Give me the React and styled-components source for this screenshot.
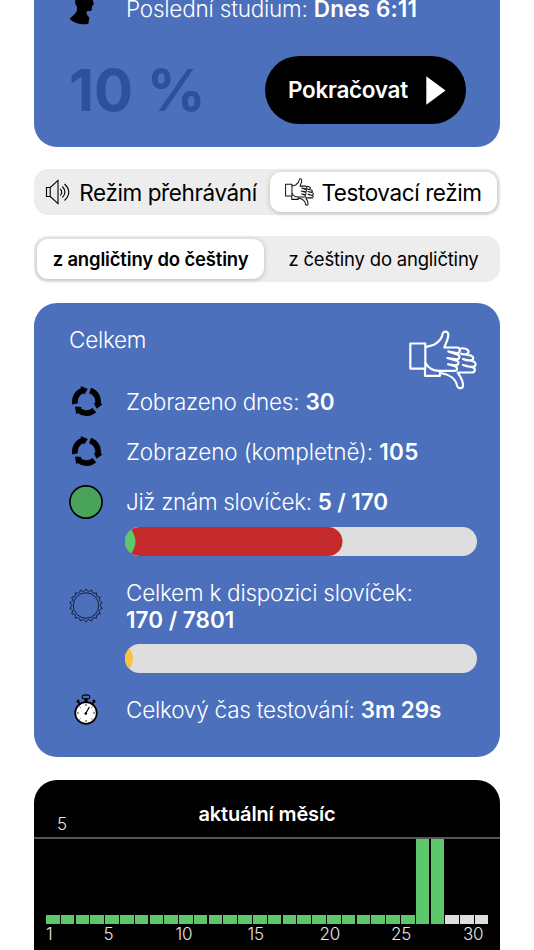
import React from "react";
import styled, { createGlobalStyle } from "styled-components";

const Global = createGlobalStyle`
  * { box-sizing: border-box; }
  body { margin: 0; background: #fff; font-family: Inter, "Noto Sans", sans-serif; }
`;

const Page = styled.main`
  width: 534px;
  height: 950px;
  overflow: hidden;
  padding: 0 34px;
  display: flex;
  flex-direction: column;
`;

const Text = styled.span`
  display: block;
  white-space: nowrap;
  font-size: ${(p) => p.$size || 22.5}px;
  font-weight: ${(p) => p.$weight || 300};
  letter-spacing: ${(p) => p.$track || 0}px;
  line-height: 27px;
  color: ${(p) => p.$color || "#fff"};
  b { font-weight: 600; letter-spacing: ${(p) => p.$boldTrack || 0}px; }
`;

const StudyCard = styled.section`
  flex: none;
  height: 147px;
  background: #4c70bc;
  border-radius: 0 0 23px 23px;
  padding: 0 34px 0 35px;
`;

const StudyRow = styled.div`
  display: flex;
  height: 56px;
  svg { flex: none; margin-right: 31px; }
  span { margin-top: -5px; }
`;

const StudyActions = styled.div`
  display: flex;
  align-items: center;
  justify-content: space-between;
  height: 68px;
`;

const ContinueButton = styled.button`
  width: 201px;
  height: 68px;
  border: 0;
  border-radius: 34px;
  background: #000;
  padding: 0 20px 0 23px;
  display: flex;
  align-items: center;
  justify-content: space-between;
  font-family: inherit;
  span { margin-top: -1px; }
`;

const Segmented = styled.div`
  flex: none;
  height: 46px;
  margin-top: ${(p) => p.$top}px;
  padding: 3px;
  border-radius: 14px;
  background: #ededed;
  display: grid;
  grid-template-columns: ${(p) => p.$columns};
`;

const Segment = styled.button`
  border: 0;
  padding: ${(p) => p.$padding || 0};
  font-family: inherit;
  border-radius: 11px;
  background: ${(p) => (p.$active ? "#fff" : "transparent")};
  box-shadow: ${(p) => (p.$active ? "0 1px 5px rgba(0,0,0,.22)" : "none")};
  display: flex;
  align-items: center;
  justify-content: center;
  gap: ${(p) => p.$gap || 0}px;
`;

const StatsCard = styled.section`
  flex: none;
  height: 454px;
  margin-top: 21px;
  border-radius: 23px;
  background: #4c70bc;
  padding: 23px 23px 0 35px;
`;

const StatsHeader = styled.header`
  display: flex;
  justify-content: space-between;
  height: 50px;
  svg { margin-top: 4px; flex: none; }
`;

const Stat = styled.div`
  display: grid;
  grid-template-columns: 57px 351px;
  align-items: center;
  height: ${(p) => p.$height || 50}px;
  padding-top: ${(p) => p.$top || 0}px;
`;

const IconSlot = styled.div`
  width: 34px;
  display: flex;
  justify-content: center;
`;

const Track = styled.div`
  width: 352px;
  height: 29px;
  margin: ${(p) => p.$margin};
  border-radius: 15px;
  overflow: hidden;
  background: #dedede;
  svg { display: block; }
`;

const ChartCard = styled.section`
  flex: none;
  height: 190px;
  margin-top: 23px;
  border-radius: 23px 23px 0 0;
  background: #000;
`;

const ChartHeader = styled.header`
  height: 59px;
  border-bottom: 2px solid #565656;
  display: grid;
  grid-template-columns: 104px 258px 104px;
`;

const MaxLabel = styled.div`
  padding: 31px 0 0 23px;
`;

const ChartTitle = styled.div`
  padding-top: 21px;
  text-align: center;
`;

const Bars = styled.div`
  height: 85px;
  margin-left: 12px;
  width: 442.5px;
  display: grid;
  grid-template-columns: repeat(30, 1fr);
  column-gap: 1.2px;
  align-items: end;
`;

const Bar = styled.i`
  height: ${(p) => p.$height}px;
  background: ${(p) => p.$color};
`;

const Axis = styled.div`
  display: grid;
  grid-template-columns: 57.5px 72px 72px 72px 71.5px 72px 40px;
  margin: -3px 0 0 12px;
  height: 24px;
`;

const HeadIcon = () => (
  <svg width="26" height="25" viewBox="117 0 78 75">
    <path d="M136 0C133 9 139 15 141 22C142 31 139 38 134 42L119 56C130 69 154 75 175 72L178 52C169 45 168 36 172 33L183 33C187 30 185 25 186 22L188 16L192 13L188 0Z" />
  </svg>
);

const PlayIcon = () => (
  <svg width="20" height="29" viewBox="0 0 20 29"><path d="M.3.3 19.5 14.5.3 28.7Z" fill="#fff" /></svg>
);

const SpeakerIcon = () => (
  <svg width="26" height="26" viewBox="0 0 26 26" fill="none" stroke="#000" strokeWidth="1.1">
    <path d="M1.5 8.5H5.2V17.5H1.5ZM5.2 8.5 13 1.4V24.6L5.2 17.5M15.2 9.8Q18.3 13 15.2 16.5M17.3 7.5Q22.5 13 17.3 18.5M19.5 5Q28 13 19.5 21.5" />
  </svg>
);

const ThumbsIcon = ({ width, height, color, stroke }) => (
  <svg width={width} height={height} viewBox="41 104 204 182" preserveAspectRatio="none" fill="none" stroke={color} strokeWidth={stroke} strokeLinejoin="round" strokeLinecap="round">
    <path d="M45 145H90V221H45ZM89 221V243H134V234" />
    <path d="M91 156L116 149C132 139 141 126 142 115C145 106 157 107 159 117C160 131 151 144 147 157H187C197 160 195 173 185 174L159 169L185 178C196 181 194 192 184 193L156 189L183 197C194 200 190 211 180 211L158 208L179 214C188 218 187 228 176 228H132C111 228 97 216 91 205" />
    <path d="M194 161C205 157 219 162 220 170C217 178 207 179 197 176L218 180C233 180 237 190 231 194C223 198 212 196 203 192L230 198C244 201 243 213 235 215C224 217 213 214 203 210L233 218C242 220 240 233 230 233H187C199 250 206 265 202 277C197 284 187 280 185 273C182 251 160 238 134 234" />
  </svg>
);

const polar = (r, deg) => {
  const a = (deg * Math.PI) / 180;
  return `${(45 + r * Math.sin(a)).toFixed(1)} ${(45 - r * Math.cos(a)).toFixed(1)}`;
};
const armPath = (start) =>
  `M${polar(43, start)}A43 43 0 0 1 ${polar(43, start + 80)}L${polar(49, start + 81)}L${polar(37, start + 108)}L${polar(22, start + 84)}L${polar(26, start + 82)}A26 26 0 0 0 ${polar(26, start)}Z`;

const CycleIcon = () => (
  <svg width="31" height="31" viewBox="-1 -1 92 92">
    {[18, 138, 258].map((a) => <path key={a} d={armPath(a)} />)}
  </svg>
);

const DotIcon = () => (
  <svg width="34" height="34" viewBox="0 0 34 34"><circle cx="17" cy="17" r="16.1" fill="#4aa35a" stroke="#000" strokeWidth="1.6" /></svg>
);

const sunPoints = Array.from({ length: 18 }, (_, i) => {
  const at = (r, a) => `${(17.5 + r * Math.sin(a)).toFixed(2)} ${(17.5 - r * Math.cos(a)).toFixed(2)}`;
  const a = (i * Math.PI) / 9;
  return `${i ? "L" : "M"}${at(17, a)}Q${at(15, a + 0.09)} ${at(14.7, a + Math.PI / 18)}Q${at(15, a + 0.26)} ${at(17, a + Math.PI / 9)}`;
}).join("");

const SunIcon = () => (
  <svg width="35" height="35" viewBox="0 0 35 35" fill="none" stroke="#101c35" strokeWidth="1">
    <path d={sunPoints + "Z"} /><circle cx="17.5" cy="17.5" r="13.1" />
  </svg>
);

const StopwatchIcon = () => (
  <svg width="24" height="31" viewBox="0 0 24 31" fill="none" stroke="#000">
    <ellipse cx="12" cy="3" rx="3.8" ry="2.1" strokeWidth="1.1" />
    <path d="M12 4V8" strokeWidth="3" />
    <path d="M3.5 7.2 6 9.8M20.5 7.2 18 9.8" strokeWidth="1.7" />
    <path d="M2.8 8.1 5 6.1M19 6.1 21.2 8.1" strokeWidth="2" />
    <circle cx="12" cy="19" r="10.8" fill="#fff" strokeWidth="1.7" />
    <path d="M12 9.8V12M12 26V28M2.8 19H5M19 19H21.2M5.5 12.5 6.5 13.5M18.5 12.5 17.5 13.5M5.5 25.5 6.5 24.5M18.5 25.5 17.5 24.5" strokeWidth=".8" />
    <path d="M11.2 20.5 15.3 13" strokeWidth="1.2" /><circle cx="11.8" cy="19.5" r="1.3" fill="#000" stroke="none" />
  </svg>
);

const KnownProgress = () => (
  <svg width="352" height="29" viewBox="0 0 352 29">
    <rect x="0" width="217.5" height="29" rx="14.5" fill="#c4292c" />
    <path d="M0 0H4Q17 14.5 4 29H0Z" fill="#5ec76c" />
  </svg>
);

const TotalProgress = () => (
  <svg width="352" height="29" viewBox="0 0 352 29"><path d="M0 0H1Q15 14.5 1 29H0Z" fill="#f7c244" /></svg>
);

const bars = Array.from({ length: 30 }, (_, i) => ({
  height: i === 25 || i === 26 ? 85 : 9,
  color: i > 26 ? "#dedede" : "#5ec76c",
}));

export default function App() {
  return (
    <>
      <Global />
      <Page>
        <StudyCard>
          <StudyRow><HeadIcon /><Text $track={-0.21} $boldTrack={0.15}>Poslední studium: <b>Dnes 6:11</b></Text></StudyRow>
          <StudyActions>
            <Text $size={58} $weight={700} $color="#2c529b">10 %</Text>
            <ContinueButton><Text $weight={600} $track={-0.3}>Pokračovat</Text><PlayIcon /></ContinueButton>
          </StudyActions>
        </StudyCard>

        <Segmented $top={22} $columns="233px 227px">
          <Segment $gap={8} $padding="0 5px 0 0"><SpeakerIcon /><Text $weight={400} $track={-0.4} $color="#000">Režim přehrávání</Text></Segment>
          <Segment $active $gap={7}><ThumbsIcon width={29} height={28} color="#111" stroke={7} /><Text $weight={400} $track={-0.4} $color="#000">Testovací režim</Text></Segment>
        </Segmented>
        <Segmented $top={21} $columns="227px 233px">
          <Segment $active><Text $size={18.5} $weight={600} $track={-0.17} $color="#000">z angličtiny do češtiny</Text></Segment>
          <Segment $padding="0 0 0 6px"><Text $size={18.5} $weight={400} $track={-0.2} $color="#000">z češtiny do angličtiny</Text></Segment>
        </Segmented>

        <StatsCard>
          <StatsHeader><Text $track={-0.25}>Celkem</Text><ThumbsIcon width={68} height={60} color="#fff" stroke={6.5} /></StatsHeader>
          <Stat><IconSlot><CycleIcon /></IconSlot><Text $track={-0.24}>Zobrazeno dnes: <b>30</b></Text></Stat>
          <Stat $top={1}><IconSlot><CycleIcon /></IconSlot><Text $track={-0.14} $boldTrack={0.3}>Zobrazeno (kompletně): <b>105</b></Text></Stat>
          <Stat $height={51}><IconSlot><DotIcon /></IconSlot><Text $track={-0.33} $boldTrack={-0.1}>Již znám slovíček: <b>5 / 170</b></Text></Stat>
          <Track $margin="0 0 0 56px"><KnownProgress /></Track>
          <Stat $height={88} $top={11}>
            <IconSlot><SunIcon /></IconSlot>
            <div><Text $track={-0.24}>Celkem k dispozici slovíček:</Text><Text><b>170 / 7801</b></Text></div>
          </Stat>
          <Track $margin="0 0 0 56px"><TotalProgress /></Track>
          <Stat $height={73}><IconSlot><StopwatchIcon /></IconSlot><Text $track={-0.22} $boldTrack={-0.1}>Celkový čas testování: <b>3m 29s</b></Text></Stat>
        </StatsCard>

        <ChartCard>
          <ChartHeader>
            <MaxLabel><Text $size={17} $color="#e6e6e6">5</Text></MaxLabel>
            <ChartTitle><Text $size={20} $weight={600} $track={-0.15}>aktuální měsíc</Text></ChartTitle>
          </ChartHeader>
          <Bars>{bars.map((b, i) => <Bar key={i} $height={b.height} $color={b.color} />)}</Bars>
          <Axis>{[1, 5, 10, 15, 20, 25, 30].map((n) => <Text key={n} $size={17} $track={-0.3} $color="#e6e6e6">{n}</Text>)}</Axis>
        </ChartCard>
      </Page>
    </>
  );
}
